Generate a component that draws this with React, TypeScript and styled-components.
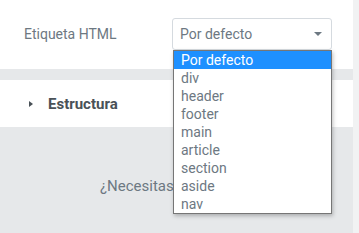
import React from "react";
import styled, { createGlobalStyle } from "styled-components";

const OPTIONS = ["Por defecto", "div", "header", "footer", "main", "article", "section", "aside", "nav"];

const GlobalStyle = createGlobalStyle`
  html, body {
    margin: 0;
    padding: 0;
    background: #e6e8ea;
    font-family: Roboto, "Liberation Sans", sans-serif;
  }
`;

const Page = styled.div`
  display: flex;
  width: 359px;
  height: 233px;
  overflow: hidden;
`;

const Panel = styled.div`
  flex: 1;
  display: flex;
  flex-direction: column;
  background: #e6e8ea;
`;

const Scrollbar = styled.div`
  width: 6px;
  background: #f1f2f3;
`;

const ControlSection = styled.div`
  background: #fff;
  height: 69px;
  padding: 18px 21px 0 24px;
  box-sizing: border-box;
  display: flex;
  align-items: flex-start;
  justify-content: space-between;
`;

const Label = styled.label`
  font-size: 14px;
  color: #6d7882;
  line-height: 32px;
`;

const SelectWrap = styled.div`
  position: relative;
  width: 160px;
`;

const SelectBox = styled.div`
  height: 32px;
  box-sizing: border-box;
  border: 1px solid #d5dadf;
  border-radius: 3px;
  padding: 0 7px;
  display: flex;
  align-items: center;
  justify-content: space-between;
  font-size: 14px;
  color: #6d7882;
`;

const Caret = styled.span`
  width: 0;
  height: 0;
  border-left: 4px solid transparent;
  border-right: 4px solid transparent;
  border-top: 4px solid #6d7882;
  margin-right: 2px;
`;

const Dropdown = styled.ul`
  position: absolute;
  top: 32px;
  left: 1px;
  right: 0;
  margin: 0;
  padding: 0;
  list-style: none;
  background: #fff;
  border: 1px solid #767676;
  box-shadow: 1px 2px 4px rgba(0, 0, 0, 0.25);
  z-index: 2;
`;

const Option = styled.li<{ $active?: boolean }>`
  height: 18px;
  line-height: 18px;
  padding: 0 7px;
  font-size: 14px;
  color: ${(p) => (p.$active ? "#fff" : "#6d7882")};
  background: ${(p) => (p.$active ? "#1e90ff" : "transparent")};
`;

const Gap = styled.div`
  height: 11px;
`;

const SectionHeader = styled.div`
  background: #fff;
  height: 47px;
  display: flex;
  align-items: center;
  padding-left: 29px;
  gap: 15px;
`;

const Arrow = styled.span`
  width: 0;
  height: 0;
  border-top: 3px solid transparent;
  border-bottom: 3px solid transparent;
  border-left: 4px solid #495157;
`;

const SectionTitle = styled.span`
  font-size: 15px;
  font-weight: 700;
  color: #495157;
`;

const Help = styled.div`
  flex: 1;
  padding: 50px 0 0 100px;
  font-size: 15px;
  color: #6d7882;
  white-space: nowrap;
`;

export default function App() {
  return (
    <Page>
      <GlobalStyle />
      <Panel>
        <ControlSection>
          <Label>Etiqueta HTML</Label>
          <SelectWrap>
            <SelectBox>
              Por defecto
              <Caret />
            </SelectBox>
            <Dropdown>
              {OPTIONS.map((o, i) => (
                <Option key={o} $active={i === 0}>
                  {o}
                </Option>
              ))}
            </Dropdown>
          </SelectWrap>
        </ControlSection>
        <Gap />
        <SectionHeader>
          <Arrow />
          <SectionTitle>Estructura</SectionTitle>
        </SectionHeader>
        <Help>¿Necesitas ayuda?</Help>
      </Panel>
      <Scrollbar />
    </Page>
  );
}
